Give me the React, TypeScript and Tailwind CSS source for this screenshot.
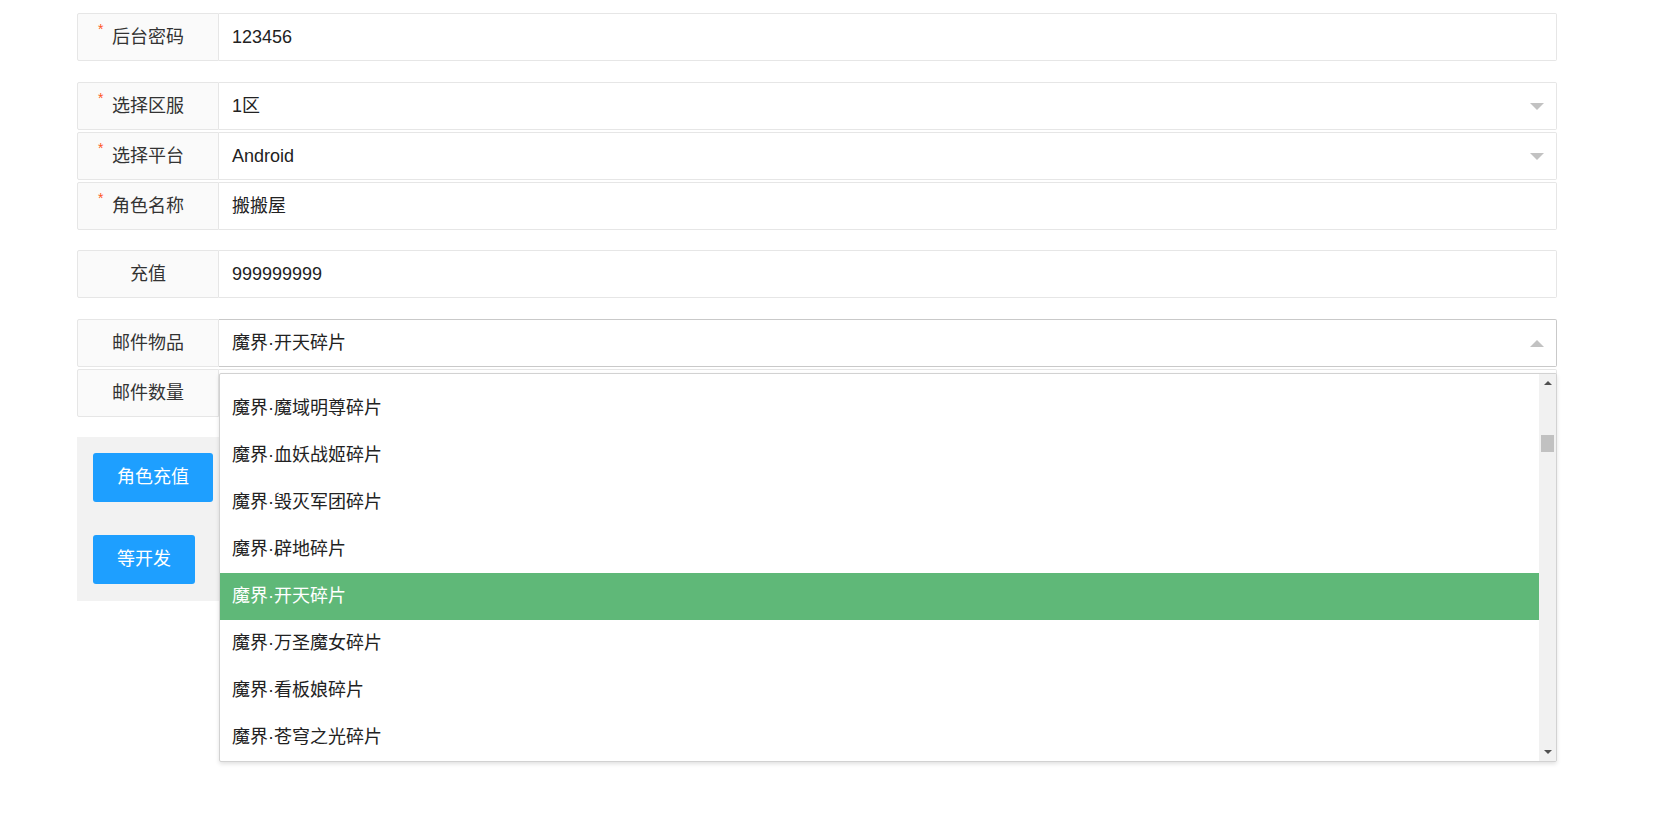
import React from 'react'

const FONT = {fontFamily: '"Liberation Sans", "Noto Sans CJK SC", sans-serif'}

interface RowProps {
  label: string;
  value: string;
  required?: boolean;
  arrow?: 'down' | 'up';
  focused?: boolean;
  children?: React.ReactNode;
}

const Row = ({label, value, required, arrow, focused, children}: RowProps) => (
  <div className="relative flex h-[48px]">
    <div className="relative flex w-[142px] shrink-0 items-center justify-center rounded-l-[2px] border border-[#e6e6e6] bg-[#fafafa] text-[#333]">
      {required && <span className="absolute left-[20px] top-[8px] text-[14px] leading-none text-[#ff5722]">*</span>}
      {label}
    </div>
    <div className={`flex flex-1 items-center rounded-r-[2px] border-y border-r bg-white pl-[13px] pr-[12px] text-[#222] ${focused ? 'border-[#c9c9c9]' : 'border-[#e6e6e6]'}`}>
      <span className="flex-1">{value}</span>
      {arrow === 'down' && <span className="h-0 w-0 border-x-[7px] border-t-[7px] border-x-transparent border-t-[#c2c2c2]" />}
      {arrow === 'up' && <span className="h-0 w-0 border-x-[7px] border-b-[7px] border-x-transparent border-b-[#c2c2c2]" />}
    </div>
    {children}
  </div>
)

const ITEMS = [
  '魔界·魔域明尊碎片',
  '魔界·血妖战姬碎片',
  '魔界·毁灭军团碎片',
  '魔界·辟地碎片',
  '魔界·开天碎片',
  '魔界·万圣魔女碎片',
  '魔界·看板娘碎片',
  '魔界·苍穹之光碎片',
]

const Dropdown = () => (
  <div className="absolute left-[142px] right-0 top-[54px] z-10 flex h-[389px] overflow-hidden rounded-[2px] border border-[#d2d2d2] bg-white shadow-[0_2px_4px_rgba(0,0,0,0.12)]">
    <div className="flex-1 overflow-hidden pt-[11px]">
      <ul>
        {ITEMS.map(item =>
          <li
            key={item}
            className={`h-[47px] pl-[12px] leading-[47px] ${item === '魔界·开天碎片' ? 'bg-[#5fb878] text-white' : 'text-[#222]'}`}
          >
            {item}
          </li>
        )}
      </ul>
    </div>
    <div className="relative w-[17px] shrink-0 bg-[#f1f1f1]">
      <span className="absolute left-[5px] top-[7px] h-0 w-0 border-x-[4px] border-b-[4px] border-x-transparent border-b-[#505050]" />
      <span className="absolute left-[2px] top-[61px] h-[17px] w-[13px] bg-[#c1c1c1]" />
      <span className="absolute bottom-[7px] left-[5px] h-0 w-0 border-x-[4px] border-t-[4px] border-x-transparent border-t-[#505050]" />
    </div>
  </div>
)

const App = () => {
  return (
    <div className="min-h-[825px] bg-white pl-[77px] pt-[13px] text-[18px]" style={FONT}>
      <div className="w-[1480px]">
        <div className="mb-[21px]">
          <Row label="后台密码" value="123456" required />
        </div>

        <div className="mb-[20px] flex flex-col gap-[2px]">
          <Row label="选择区服" value="1区" required arrow="down" />
          <Row label="选择平台" value="Android" required arrow="down" />
          <Row label="角色名称" value="搬搬屋" required />
        </div>

        <div className="mb-[21px]">
          <Row label="充值" value="999999999" />
        </div>

        <div className="relative z-10 mb-[20px] flex flex-col gap-[2px]">
          <Row label="邮件物品" value="魔界·开天碎片" arrow="up" focused>
            <Dropdown />
          </Row>
          <Row label="邮件数量" value="" />
        </div>

        <div className="flex flex-col items-start gap-[33px] bg-[#f2f2f2] px-[16px] pb-[17px] pt-[16px]">
          <button className="h-[49px] w-[120px] rounded-[3px] bg-[#1e9fff] text-white">角色充值</button>
          <button className="h-[49px] w-[102px] rounded-[3px] bg-[#1e9fff] text-white">等开发</button>
        </div>
      </div>
    </div>
  )
}

export default App
